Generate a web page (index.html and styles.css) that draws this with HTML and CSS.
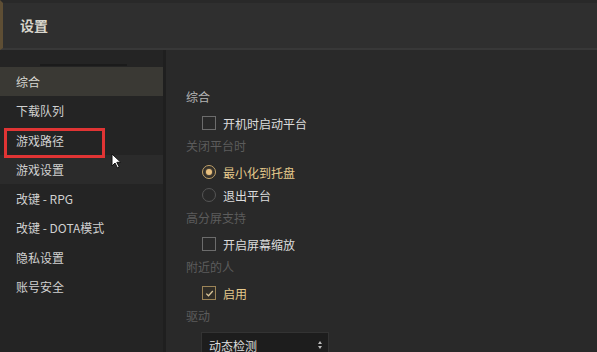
FILE: index.html
```html
<!DOCTYPE html>
<html lang="zh-CN">
<head>
<meta charset="utf-8">
<link rel="stylesheet" href="styles.css">
</head>
<body>
<div class="app">
  <header class="titlebar"><h1 class="title">设置</h1></header>
  <div class="body">
    <nav class="sidebar">
      <div class="sidebar-top"><span class="sidebar-scroll"></span></div>
      <div class="nav-item is-active">综合</div>
      <div class="nav-item">下载队列</div>
      <div class="nav-item has-mark">游戏路径<span class="mark"></span>
        <svg class="cursor" width="11" height="16" viewBox="0 0 11 16"><path d="M1 1 L1 13 L4 10 L6.5 15 L8.3 14.2 L5.8 9.3 L9.8 9.3 Z" fill="#fff" stroke="#111" stroke-width="1"/></svg>
      </div>
      <div class="nav-item is-hover">游戏设置</div>
      <div class="nav-item">改键 - RPG</div>
      <div class="nav-item">改键 - DOTA模式</div>
      <div class="nav-item">隐私设置</div>
      <div class="nav-item">账号安全</div>
    </nav>
    <main class="content">
      <section class="section">
        <div class="section-title is-main">综合</div>
        <label class="option"><span class="box"></span>开机时启动平台</label>
      </section>
      <section class="section">
        <div class="section-title">关闭平台时</div>
        <label class="option is-on"><span class="radio is-checked"></span>最小化到托盘</label>
        <label class="option"><span class="radio"></span>退出平台</label>
      </section>
      <section class="section">
        <div class="section-title">高分屏支持</div>
        <label class="option"><span class="box"></span>开启屏幕缩放</label>
      </section>
      <section class="section">
        <div class="section-title">附近的人</div>
        <label class="option is-on"><span class="box is-checked"><svg width="11" height="11" viewBox="0 0 11 11"><path d="M2.3 5.6 L4.5 7.8 L8.8 3" fill="none" stroke="#d9c59a" stroke-width="1.3"/></svg></span>启用</label>
      </section>
      <section class="section">
        <div class="section-title">驱动</div>
        <div class="select"><span>动态检测</span><span class="arrows"><i class="up"></i><i class="down"></i></span></div>
      </section>
    </main>
  </div>
</div>
</body>
</html>
```

FILE: styles.css
```css
* { box-sizing: border-box; }
html, body { margin: 0; padding: 0; }
body {
  width: 597px;
  height: 352px;
  overflow: hidden;
  background: #2a2a2a;
  font-family: "Noto Sans CJK SC", "Noto Sans", sans-serif;
  font-size: 12px;
  color: #d2d2d2;
}
.app { display: flex; flex-direction: column; height: 352px; }
.titlebar {
  height: 50px;
  flex: none;
  background: #2f2f2f;
  border-top: 3px solid #292929;
  border-left: 3px solid #5e4e34;
  border-bottom: 2px solid #383838;
  display: flex;
  align-items: center;
  padding-left: 17px;
}
.title {
  margin: 0;
  font-size: 14px;
  font-weight: 700;
  color: #d8d6cc;
  line-height: 20px;
  padding-bottom: 2px;
}
.body { flex: 1; display: flex; min-height: 0; }
.sidebar {
  width: 166px;
  flex: none;
  background: #242424;
  border-right: 3px solid #1f1f1f;
}
.sidebar-top {
  height: 17px;
  display: flex;
  align-items: flex-end;
  padding-left: 40px;
}
.sidebar-scroll { width: 87px; height: 2px; background: #1b1b1b; margin-bottom: 1px; }
.nav-item {
  position: relative;
  height: 29.3px;
  line-height: 29px;
  padding-left: 16px;
  color: #d0d0d0;
}
.nav-item.is-active { background: #3a3934; color: #d8d8d2; }
.nav-item.is-hover { background: #2b2b2b; }
.mark {
  position: absolute;
  z-index: 1;
  left: 4px;
  top: 2px;
  width: 101px;
  height: 30px;
  border: 3px solid #e03434;
}
.cursor { position: absolute; z-index: 2; left: 111px; top: 27px; }
.content {
  flex: 1;
  padding: 39px 0 0 20px;
  background: #292929;
}
.section { margin-bottom: 5px; }
.section-title {
  height: 16px;
  line-height: 16px;
  margin-bottom: 8px;
  color: #5c5c5c;
}
.section-title.is-main { color: #b4b4b4; }
.option {
  display: flex;
  align-items: center;
  height: 20px;
  padding-left: 16px;
  color: #dcdcdc;
  margin-bottom: 3px;
}
.option:last-child { margin-bottom: 0; }
.option.is-on { color: #e6c98c; }
.box {
  width: 14px;
  height: 14px;
  border: 1px solid #6c6c6c;
  margin-right: 7px;
  display: flex;
  align-items: center;
  justify-content: center;
}
.box.is-checked { border-color: #9c8457; background: #302d27; }
.radio {
  width: 14px;
  height: 14px;
  border: 1px solid #555;
  border-radius: 50%;
  margin-right: 7px;
  display: flex;
  align-items: center;
  justify-content: center;
}
.radio.is-checked { border-color: #c4a46a; }
.radio.is-checked::after {
  content: "";
  width: 6px;
  height: 6px;
  border-radius: 50%;
  background: #e8c080;
  box-shadow: 0 0 3px #a88850;
}
.select {
  margin: 8px 0 0 15px;
  width: 128px;
  height: 24px;
  background: #1d1d1d;
  border: 1px solid #333;
  display: flex;
  align-items: center;
  justify-content: space-between;
  padding: 2px 6px 0 7px;
  color: #dedede;
}
.arrows { display: flex; flex-direction: column; gap: 2px; }
.arrows i { width: 0; height: 0; border-left: 2.5px solid transparent; border-right: 2.5px solid transparent; }
.arrows .up { border-bottom: 3px solid #bbb; }
.arrows .down { border-top: 3px solid #bbb; }
```
